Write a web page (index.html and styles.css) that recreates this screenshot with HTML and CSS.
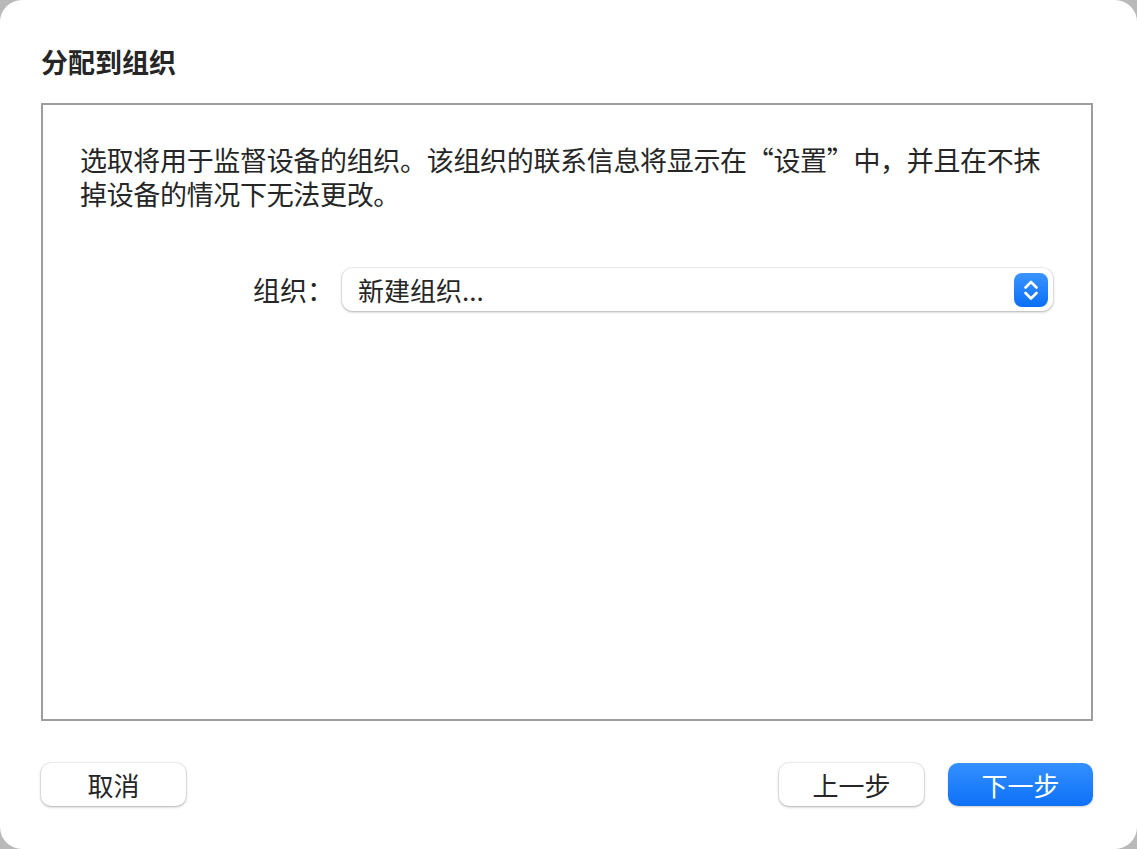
FILE: index.html
```html
<!DOCTYPE html>
<html lang="zh-CN">
<head>
    <meta charset="UTF-8">
    <meta name="viewport" content="width=device-width, initial-scale=1.0">
    <title>分配到组织</title>
    <link rel="stylesheet" href="styles.css">
</head>
<body>
    <div class="window">
        <h1 class="title">分配到组织</h1>

        <div class="panel">
            <p class="description">选取将用于监督设备的组织。该组织的联系信息将显示在“设置”中，并且在不抹<br>掉设备的情况下无法更改。</p>

            <div class="field">
                <label class="field-label" for="org">组织：</label>
                <div class="popup" id="org">
                    <span class="popup-value">新建组织...</span>
                    <svg class="stepper" width="34" height="34" viewBox="0 0 34 34">
                        <defs>
                            <linearGradient id="blue" x1="0" y1="0" x2="0" y2="1">
                                <stop offset="0" stop-color="#3a94ff"/>
                                <stop offset="1" stop-color="#0b6ff6"/>
                            </linearGradient>
                        </defs>
                        <rect x="0" y="0" width="34" height="34" rx="8" fill="url(#blue)"/>
                        <path d="M11.5 14.5 L17 9 L22.5 14.5" fill="none" stroke="#fff" stroke-width="2.6" stroke-linecap="round" stroke-linejoin="round"/>
                        <path d="M11.5 20 L17 25.5 L22.5 20" fill="none" stroke="#fff" stroke-width="2.6" stroke-linecap="round" stroke-linejoin="round"/>
                    </svg>
                </div>
            </div>
        </div>

        <div class="footer">
            <button class="button">取消</button>
            <div class="footer-right">
                <button class="button">上一步</button>
                <button class="button primary">下一步</button>
            </div>
        </div>
    </div>
</body>
</html>
```

FILE: styles.css
```css
html, body {
    margin: 0;
    padding: 0;
}
body {
    background: #b9b9b9;
    font-family: "Noto Sans CJK SC", "Noto Sans", sans-serif;
    color: #262626;
}
.window {
    box-sizing: border-box;
    width: 1137px;
    height: 849px;
    background: #ffffff;
    border-radius: 22px;
    padding: 46px 44px 0 41px;
    display: flex;
    flex-direction: column;
}
.title {
    margin: 0;
    font-size: 27px;
    line-height: 32px;
    font-weight: 700;
    color: #262626;
}
.panel {
    margin-top: 25px;
    height: 618px;
    box-sizing: border-box;
    border: 2px solid #9d9d9d;
    background: #ffffff;
    padding: 38px 20px 0 37px;
}
.description {
    margin: 0;
    font-size: 27px;
    line-height: 34px;
    letter-spacing: -0.33px;
    color: #262626;
}
.field {
    margin-top: 57px;
    display: grid;
    grid-template-columns: 262px 1fr;
    align-items: center;
    padding-right: 18px;
}
.field-label {
    text-align: right;
    padding-right: 8px;
    font-size: 27px;
    color: #262626;
}
.popup {
    height: 43px;
    box-sizing: border-box;
    background: #ffffff;
    border-radius: 11px;
    box-shadow: 0 0 0 1px rgba(0,0,0,0.05), 0 1px 3px rgba(0,0,0,0.28);
    display: flex;
    align-items: center;
    justify-content: space-between;
    padding: 0 5px 0 16px;
}
.popup-value {
    font-size: 26px;
    color: #262626;
}
.stepper {
    display: block;
}
.footer {
    margin-top: 42px;
    display: flex;
    justify-content: space-between;
}
.footer-right {
    display: flex;
    gap: 24px;
}
.button {
    width: 145px;
    height: 43px;
    border: none;
    border-radius: 10px;
    background: #ffffff;
    box-shadow: 0 0 0 1px rgba(0,0,0,0.05), 0 1px 3px rgba(0,0,0,0.28);
    font-family: "Noto Sans CJK SC", "Noto Sans", sans-serif;
    font-size: 26px;
    color: #262626;
    padding: 0;
    cursor: pointer;
}
.button.primary {
    background: linear-gradient(#3490ff, #0d71f7);
    color: #ffffff;
    box-shadow: 0 1px 2px rgba(0,0,0,0.2);
}
```
